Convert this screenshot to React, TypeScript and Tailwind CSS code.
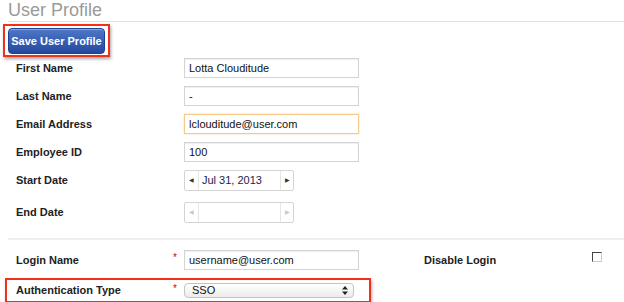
import React from 'react';

const labelCls = 'w-[157px] shrink-0 text-[11px] font-bold text-[#222]';

const TextBox: React.FC<{ value: string; focused?: boolean }> = ({ value, focused }) => (
  <div
    className={`w-[175px] h-[20px] flex items-center px-[4px] text-[11px] text-[#111] bg-white border ${
      focused ? 'border-[#f5c98a] shadow-[0_0_2px_#f8d8a8]' : 'border-[#d4d4d4] shadow-[inset_0_1px_1px_#eee]'
    }`}
  >
    {value}
  </div>
);

const DatePicker: React.FC<{ value?: string }> = ({ value }) => {
  const arrow = value ? 'text-[#333]' : 'text-[#c8c8c8]';
  return (
    <div className="w-[110px] h-[21px] flex items-stretch bg-white border border-[#d4d4d4] rounded-[2px] text-[11px]">
      <div className={`w-[14px] flex items-center justify-center border-r border-[#e6e6e6] text-[6px] ${arrow}`}>◀</div>
      <div className="flex-1 flex items-center pl-[3px] text-[#1c1c4e]">{value}</div>
      <div className={`w-[13px] flex items-center justify-center border-l border-[#e6e6e6] text-[6px] ${arrow}`}>▶</div>
    </div>
  );
};

const Row: React.FC<{ label: string; h: string; children?: React.ReactNode; req?: boolean }> = ({ label, h, children, req }) => (
  <div className={`flex items-center pl-[16px] ${h}`}>
    <div className={labelCls}>{label}</div>
    <div className="w-[11px] shrink-0 text-[10px] text-[#d0021b] leading-none -mt-[4px]">{req ? '*' : ''}</div>
    {children}
  </div>
);

export default function App() {
  return (
    <div className="w-[624px] h-[302px] bg-white overflow-hidden" style={{ fontFamily: '"Liberation Sans", Arial, sans-serif' }}>
      {/* Title */}
      <div className="ml-[8px] h-[22px] border-b border-[#e2e2e2] text-[18px] leading-[21px] text-[#9a9a9a]">
        User Profile
      </div>

      {/* Save button */}
      <div className="h-[32px] pt-[2px] pl-[3px]">
        <div className="w-[107px] h-[33px] border-2 border-[#f0301a] shadow-[1px_2px_3px_rgba(0,0,0,0.35)] pl-[3px] pt-[2px]">
          <button className="w-[97px] h-[26px] rounded-[4px] border border-[#1f3f8f] bg-gradient-to-b from-[#4f78c8] to-[#24489e] text-white text-[11px] font-bold shadow-[inset_0_1px_0_rgba(255,255,255,0.35)]">
            Save User Profile
          </button>
        </div>
      </div>

      <Row label="First Name" h="h-[28px]"><TextBox value="Lotta Clouditude" /></Row>
      <Row label="Last Name" h="h-[28px]"><TextBox value="-" /></Row>
      <Row label="Email Address" h="h-[28px]"><TextBox value="lclouditude@user.com" focused /></Row>
      <Row label="Employee ID" h="h-[28px]"><TextBox value="100" /></Row>
      <Row label="Start Date" h="h-[29px]"><DatePicker value="Jul 31, 2013" /></Row>
      <Row label="End Date" h="h-[34px]"><DatePicker /></Row>

      {/* Divider */}
      <div className="ml-[8px] mt-[9px] border-t-2 border-[#eeeeee]" />

      <div className="flex items-center h-[38px] pt-[2px]">
        <Row label="Login Name" h="h-[36px]" req>
          <TextBox value="username@user.com" />
        </Row>
        <div className="ml-[65px] w-[168px] text-[11px] font-bold text-[#222]">Disable Login</div>
        <div className="w-[10px] h-[10px] -mt-[6px] border-t border-l border-[#444] border-r border-b border-r-[#ccc] border-b-[#ccc]" />
      </div>

      {/* Authentication type */}
      <div className="pl-[5px]">
        <div className="w-[366px] h-[25px] border-2 border-[#f0301a] shadow-[1px_2px_3px_rgba(0,0,0,0.3)] flex items-center">
          <div className="flex items-center pl-[9px]">
            <div className={labelCls}>Authentication Type</div>
            <div className="w-[11px] shrink-0 text-[10px] text-[#d0021b] leading-none -mt-[4px]">*</div>
            <div className="w-[170px] h-[15px] rounded-[4px] border border-[#c4c4c4] bg-gradient-to-b from-white to-[#ececec] flex items-center pl-[7px] pr-[5px] text-[11px] text-[#111]">
              <span className="flex-1">SSO</span>
              <svg width="6" height="9" viewBox="0 0 6 9">
                <path d="M3 0 L6 3.5 H0 Z" fill="#222" />
                <path d="M3 9 L6 5.5 H0 Z" fill="#222" />
              </svg>
            </div>
          </div>
        </div>
      </div>
    </div>
  );
}
